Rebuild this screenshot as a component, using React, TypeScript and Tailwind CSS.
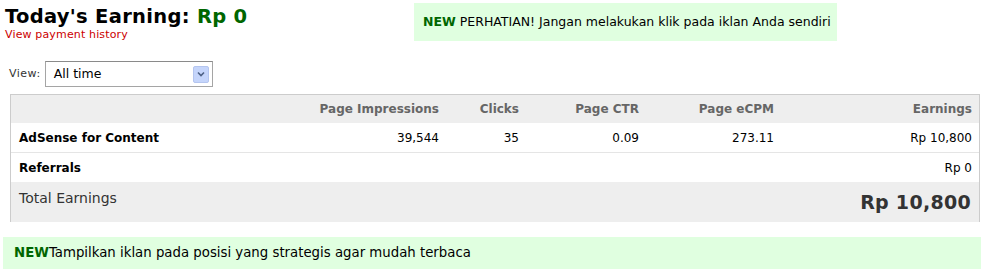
import React from "react";

const font = { fontFamily: '"DejaVu Sans", Verdana, sans-serif' };

export default function App() {
  return (
    <div className="w-[990px] h-[276px] bg-white text-black relative" style={font}>
      <div className="flex items-start">
        <div className="pl-[5px] pt-[5px] w-[414px]">
          <div className="text-[19.5px] font-bold leading-[23px] tracking-[0.3px]">
            Today's Earning: <span className="text-[#006600]">Rp 0</span>
          </div>
          <div className="text-[11px] leading-[13px] text-[#cc0000] tracking-[0.15px]">View payment history</div>
        </div>
        <div className="mt-[3px] w-[423px] h-[38px] bg-[#e0ffe0] flex items-center pl-[9px] text-[12.5px]">
          <span className="font-bold text-[#006600]">NEW</span>&nbsp;PERHATIAN! Jangan melakukan klik pada iklan Anda sendiri
        </div>
      </div>

      <div className="flex items-center mt-[20px] pl-[9px] h-[26px]">
        <span className="text-[11px] text-[#333] tracking-[0.5px]">View:</span>
        <div className="ml-[4px] w-[168px] h-[26px] border border-[#a5a5a5] border-t-[#8a8a8a] flex items-center justify-between pl-[8px] pr-[3px] bg-white">
          <span className="text-[12.5px]">All time</span>
          <div className="w-[16px] h-[17px] bg-[#c5d5fb] rounded-[2px] border border-[#b4c5ef] flex items-center justify-center">
            <svg width="8" height="6" viewBox="0 0 8 6"><path d="M1 1.5 L4 4.5 L7 1.5" stroke="#4d6185" strokeWidth="1.6" fill="none" /></svg>
          </div>
        </div>
      </div>

      <div className="ml-[10px] mt-[7px] w-[970px] border-t border-[#cccccc] border-l border-r border-l-[#cccccc] border-r-[#cccccc]">
        <div className="grid grid-cols-[238px_190px_80px_120px_135px_198px] h-[28px] bg-[#eeeeee] items-center text-[12px] font-bold text-[#666666]">
          <div></div>
          <div className="text-right">Page Impressions</div>
          <div className="text-right">Clicks</div>
          <div className="text-right">Page CTR</div>
          <div className="text-right">Page eCPM</div>
          <div className="text-right">Earnings</div>
        </div>
        <div className="grid grid-cols-[238px_190px_80px_120px_135px_198px] h-[30px] bg-white items-center text-[12px] border-t border-white border-b border-b-[#e5e5e5]">
          <div className="pl-[8px] font-bold">AdSense for Content</div>
          <div className="text-right">39,544</div>
          <div className="text-right">35</div>
          <div className="text-right">0.09</div>
          <div className="text-right">273.11</div>
          <div className="text-right">Rp 10,800</div>
        </div>
        <div className="grid grid-cols-[238px_190px_80px_120px_135px_198px] h-[29px] bg-white items-center text-[12px]">
          <div className="pl-[8px] font-bold">Referrals</div>
          <div></div>
          <div></div>
          <div></div>
          <div></div>
          <div className="text-right">Rp 0</div>
        </div>
        <div className="flex justify-between items-center h-[40px] bg-[#eeeeee] px-[8px]">
          <span className="text-[14px] text-[#333] -mt-[8px]">Total Earnings</span>
          <span className="text-[19px] font-bold text-[#333] tracking-[0.3px]">Rp 10,800</span>
        </div>
      </div>

      <div className="ml-[3px] mt-[15px] w-[978px] h-[32px] bg-[#e0ffe0] flex items-center pl-[11px] text-[13.3px]">
        <span className="font-bold text-[#006600]">NEW</span>Tampilkan iklan pada posisi yang strategis agar mudah terbaca
      </div>
    </div>
  );
}
